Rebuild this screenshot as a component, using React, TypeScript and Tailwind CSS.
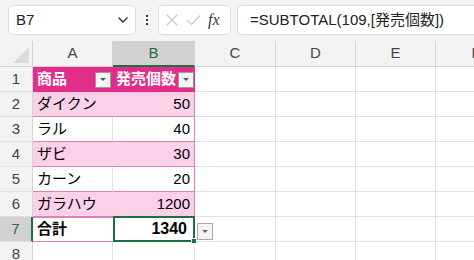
import { useState } from 'react';

const font = '"Liberation Sans", "Noto Sans CJK JP", sans-serif';

const rows = [
  { name: 'ダイクン', qty: '50', band: true },
  { name: 'ラル', qty: '40', band: false },
  { name: 'ザビ', qty: '30', band: true },
  { name: 'カーン', qty: '20', band: false },
  { name: 'ガラハウ', qty: '1200', band: true },
];

function FilterBtn() {
  return (
    <div className="w-[16px] h-[16px] bg-[#f4f4f4] border border-[#9a9a9a] flex items-center justify-center">
      <svg width="8" height="5" viewBox="0 0 8 5"><path d="M1 1h6L4 4z" fill="#555" /></svg>
    </div>
  );
}

function RowHead({ n, selected }: { n: number; selected?: boolean }) {
  return (
    <div
      className={
        'w-[33px] shrink-0 flex items-center justify-center text-[15px] border-b border-[#e1e1e1] ' +
        (selected ? 'bg-[#d2d2d2] text-[#1e6e42] border-r-2 border-r-[#1e6e42]' : 'bg-[#f3f3f3] text-[#444] border-r border-r-[#d4d4d4]')
      }
    >
      {n}
    </div>
  );
}

function EmptyCells() {
  return (
    <>
      <div className="w-[81px] shrink-0 border-r border-b border-[#e1e1e1]" />
      <div className="w-[80px] shrink-0 border-r border-b border-[#e1e1e1]" />
      <div className="w-[80px] shrink-0 border-r border-b border-[#e1e1e1]" />
      <div className="w-[80px] shrink-0 border-b border-[#e1e1e1]" />
    </>
  );
}

export default function App() {
  const [cell] = useState('B7');
  return (
    <div className="w-[474px] h-[260px] overflow-hidden bg-white text-black" style={{ fontFamily: font }}>
      <div className="h-[41px] bg-[#f3f3f3] flex items-start pt-[5px] pl-[8px] gap-[6px]">
        <div className="w-[128px] h-[30px] bg-white border border-[#dcdcdc] rounded-[5px] flex items-center justify-between pl-[7px] pr-[6px] text-[15px] text-[#222]">
          <span>{cell}</span>
          <svg width="12" height="8" viewBox="0 0 12 8"><path d="M1.5 1.5L6 6l4.5-4.5" stroke="#333" strokeWidth="1.4" fill="none" /></svg>
        </div>
        <div className="w-[10px] h-[30px] flex flex-col items-center justify-center gap-[2px]">
          <div className="w-[2px] h-[2px] bg-[#333]" />
          <div className="w-[2px] h-[2px] bg-[#333]" />
          <div className="w-[2px] h-[2px] bg-[#333]" />
        </div>
        <div className="w-[73px] h-[30px] bg-white border border-[#dcdcdc] rounded-[5px] flex items-center pl-[6px] gap-[7px]">
          <svg width="14" height="14" viewBox="0 0 14 14"><path d="M1.5 1.5l11 11M12.5 1.5l-11 11" stroke="#c8c8c8" strokeWidth="1.2" /></svg>
          <svg width="15" height="12" viewBox="0 0 15 12"><path d="M1 6l4.5 4.5L14 1.5" stroke="#c8c8c8" strokeWidth="1.2" fill="none" /></svg>
          <span className="text-[16px] italic text-[#333] leading-none" style={{ fontFamily: '"Liberation Serif", serif' }}>fx</span>
        </div>
        <div className="flex-1 h-[30px] bg-white border border-[#dcdcdc] border-r-0 rounded-l-[5px] flex items-center pl-[12px] text-[15px] text-[#222]">
          =SUBTOTAL(109,[発売個数])
        </div>
      </div>

      <div className="h-[26px] flex bg-[#f3f3f3] text-[15px] text-[#444]">
        <div className="w-[33px] shrink-0 relative border-r border-b border-[#d4d4d4]">
          <svg className="absolute right-[3px] bottom-[3px]" width="16" height="16" viewBox="0 0 16 16"><path d="M16 0V16H0z" fill="#dcdcdc" /></svg>
        </div>
        <div className="w-[80px] shrink-0 flex items-center justify-center border-r border-b border-[#d4d4d4]">A</div>
        <div className="w-[82px] shrink-0 flex items-center justify-center bg-[#d2d2d2] text-[#1e6e42] border-r border-r-[#d4d4d4] border-b-2 border-b-[#1e6e42]">B</div>
        <div className="w-[81px] shrink-0 flex items-center justify-center border-r border-b border-[#d4d4d4]">C</div>
        <div className="w-[80px] shrink-0 flex items-center justify-center border-r border-b border-[#d4d4d4]">D</div>
        <div className="w-[80px] shrink-0 flex items-center justify-center border-r border-b border-[#d4d4d4]">E</div>
        <div className="w-[80px] shrink-0 flex items-center justify-center border-b border-[#d4d4d4]">F</div>
      </div>

      <div className="h-[25px] flex text-[15px]">
        <RowHead n={1} />
        <div className="w-[80px] shrink-0 bg-[#e22d8b] text-white font-bold flex items-center justify-between pl-[4px] pr-[2px]">
          <span>商品</span>
          <FilterBtn />
        </div>
        <div className="w-[82px] shrink-0 bg-[#e22d8b] text-white font-bold flex items-center justify-between pl-[3px] pr-[1px]">
          <span>発売個数</span>
          <FilterBtn />
        </div>
        <EmptyCells />
      </div>

      {rows.map((r, i) => (
        <div key={i} className="h-[25px] flex text-[15px]">
          <RowHead n={i + 2} />
          <div className={'w-[80px] shrink-0 flex items-center pl-[4px] border-b border-[#e77db6] ' + (r.band ? 'bg-[#fad1e7]' : 'bg-white border-r border-r-[#e1e1e1]')}>
            {r.name}
          </div>
          <div className={'w-[82px] shrink-0 flex items-center justify-end pr-[4px] border-b border-r border-b-[#e77db6] border-r-[#e77db6] ' + (r.band ? 'bg-[#fad1e7]' : 'bg-white')}>
            {r.qty}
          </div>
          <EmptyCells />
        </div>
      ))}

      <div className="h-[25px] flex text-[15px] relative">
        <RowHead n={7} selected />
        <div className="w-[80px] shrink-0 flex items-center pl-[4px] font-bold border-t-2 border-t-[#e77db6] border-b border-b-[#e77db6] -mt-px">
          合計
        </div>
        <div className="w-[82px] shrink-0 relative flex items-center justify-end pr-[6px] font-bold text-[16px] border-2 border-[#1e6e42] -mt-px">
          1340
          <div className="absolute -right-[4px] -bottom-[4px] w-[6px] h-[6px] bg-[#1e6e42] border border-white" />
        </div>
        <div className="absolute left-[197px] top-[6px] w-[16px] h-[17px] bg-[#f4f4f4] border border-[#aaaaaa] flex items-center justify-center z-10">
          <svg width="8" height="5" viewBox="0 0 8 5"><path d="M1 1h6L4 4z" fill="#666" /></svg>
        </div>
        <EmptyCells />
      </div>

      <div className="h-[25px] flex text-[15px]">
        <RowHead n={8} />
        <div className="w-[80px] shrink-0 border-r border-b border-[#e1e1e1]" />
        <div className="w-[82px] shrink-0 border-r border-b border-[#e1e1e1]" />
        <EmptyCells />
      </div>
    </div>
  );
}
